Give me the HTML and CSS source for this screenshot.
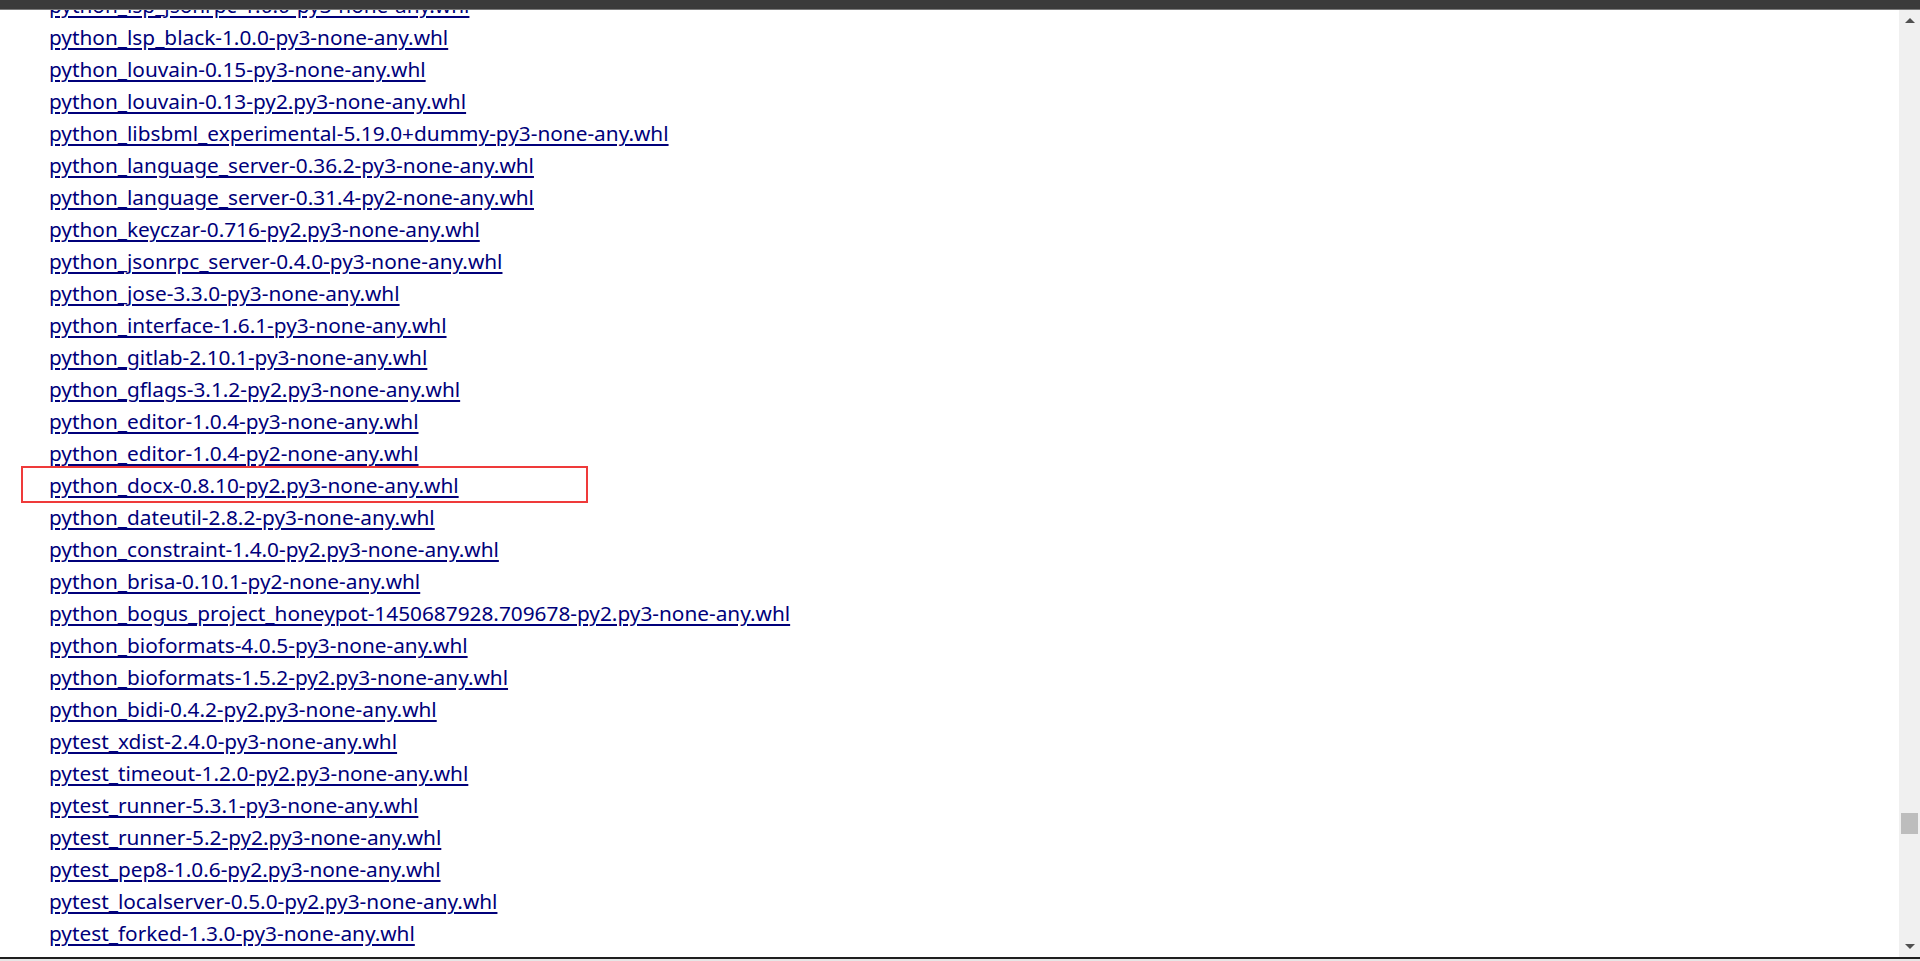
FILE: index.html
```html
<!DOCTYPE html>
<html>
<head>
<meta charset="utf-8">
<title>Links</title>
<link rel="stylesheet" href="styles.css">
</head>
<body>
<div class="window">
  <div class="topbar"></div>
  <div class="viewport">
    <div class="content">
      <div class="links">
        <a href="#">python_lsp_jsonrpc-1.0.0-py3-none-any.whl</a><br>
        <a href="#">python_lsp_black-1.0.0-py3-none-any.whl</a><br>
        <a href="#">python_louvain-0.15-py3-none-any.whl</a><br>
        <a href="#">python_louvain-0.13-py2.py3-none-any.whl</a><br>
        <a href="#">python_libsbml_experimental-5.19.0+dummy-py3-none-any.whl</a><br>
        <a href="#">python_language_server-0.36.2-py3-none-any.whl</a><br>
        <a href="#">python_language_server-0.31.4-py2-none-any.whl</a><br>
        <a href="#">python_keyczar-0.716-py2.py3-none-any.whl</a><br>
        <a href="#">python_jsonrpc_server-0.4.0-py3-none-any.whl</a><br>
        <a href="#">python_jose-3.3.0-py3-none-any.whl</a><br>
        <a href="#">python_interface-1.6.1-py3-none-any.whl</a><br>
        <a href="#">python_gitlab-2.10.1-py3-none-any.whl</a><br>
        <a href="#">python_gflags-3.1.2-py2.py3-none-any.whl</a><br>
        <a href="#">python_editor-1.0.4-py3-none-any.whl</a><br>
        <a href="#">python_editor-1.0.4-py2-none-any.whl</a><br>
        <a href="#">python_docx-0.8.10-py2.py3-none-any.whl</a><br>
        <a href="#">python_dateutil-2.8.2-py3-none-any.whl</a><br>
        <a href="#">python_constraint-1.4.0-py2.py3-none-any.whl</a><br>
        <a href="#">python_brisa-0.10.1-py2-none-any.whl</a><br>
        <a href="#">python_bogus_project_honeypot-1450687928.709678-py2.py3-none-any.whl</a><br>
        <a href="#">python_bioformats-4.0.5-py3-none-any.whl</a><br>
        <a href="#">python_bioformats-1.5.2-py2.py3-none-any.whl</a><br>
        <a href="#">python_bidi-0.4.2-py2.py3-none-any.whl</a><br>
        <a href="#">pytest_xdist-2.4.0-py3-none-any.whl</a><br>
        <a href="#">pytest_timeout-1.2.0-py2.py3-none-any.whl</a><br>
        <a href="#">pytest_runner-5.3.1-py3-none-any.whl</a><br>
        <a href="#">pytest_runner-5.2-py2.py3-none-any.whl</a><br>
        <a href="#">pytest_pep8-1.0.6-py2.py3-none-any.whl</a><br>
        <a href="#">pytest_localserver-0.5.0-py2.py3-none-any.whl</a><br>
        <a href="#">pytest_forked-1.3.0-py3-none-any.whl</a><br>
        <a href="#">pytest_flake8-1.0.7-py2.py3-none-any.whl</a><br>
        <a href="#">pytest_fixture_config-1.7.0-py2.py3-none-any.whl</a><br>
      </div>
      <div class="highlight"></div>
    </div>
    <div class="scrollbar">
      <div class="sb-btn"><span class="arrow-up"></span></div>
      <div class="sb-track"><div class="sb-thumb"></div></div>
      <div class="sb-btn"><span class="arrow-down"></span></div>
    </div>
  </div>
  <div class="bottombar"></div>
</div>
</body>
</html>
```
FILE: styles.css
```css
html, body {
  margin: 0;
  padding: 0;
  width: 1920px;
  height: 961px;
  overflow: hidden;
  background: #ffffff;
}
.window {
  display: flex;
  flex-direction: column;
  width: 1920px;
  height: 961px;
}
.topbar {
  height: 9px;
  background: #3b3b3b;
  border-bottom: 1px solid #7a7a7a;
  flex: none;
}
.viewport {
  flex: 1;
  display: flex;
  min-height: 0;
}
.content {
  flex: 1;
  position: relative;
  overflow: hidden;
  background: #ffffff;
}
.links {
  margin-top: -21px;
  padding-left: 49px;
  font-family: "Noto Sans", "Open Sans", sans-serif;
  font-size: 20.8px;
  line-height: 32px;
  white-space: nowrap;
}
.links a {
  color: #00007a;
  text-decoration: underline;
  text-decoration-thickness: 1.5px;
  text-underline-offset: 3px;
}
.highlight {
  position: absolute;
  left: 21px;
  top: 456px;
  width: 563px;
  height: 33px;
  border: 2px solid #ef3a3a;
}
.scrollbar {
  width: 21px;
  flex: none;
  background: #f0f0f0;
  display: flex;
  flex-direction: column;
}
.sb-btn {
  height: 21px;
  flex: none;
  display: flex;
  align-items: center;
  justify-content: center;
}
.arrow-up {
  width: 0;
  height: 0;
  border-left: 5px solid transparent;
  border-right: 5px solid transparent;
  border-bottom: 5px solid #505050;
}
.arrow-down {
  width: 0;
  height: 0;
  border-left: 5px solid transparent;
  border-right: 5px solid transparent;
  border-top: 5px solid #505050;
}
.sb-track {
  flex: 1;
  padding-top: 782px;
  padding-left: 2px;
}
.sb-thumb {
  width: 17px;
  height: 21px;
  background: #bdbdbd;
}
.bottombar {
  height: 2px;
  background: #1f1f1f;
  border-bottom: 2px solid #e6e6e6;
  flex: none;
}
```
